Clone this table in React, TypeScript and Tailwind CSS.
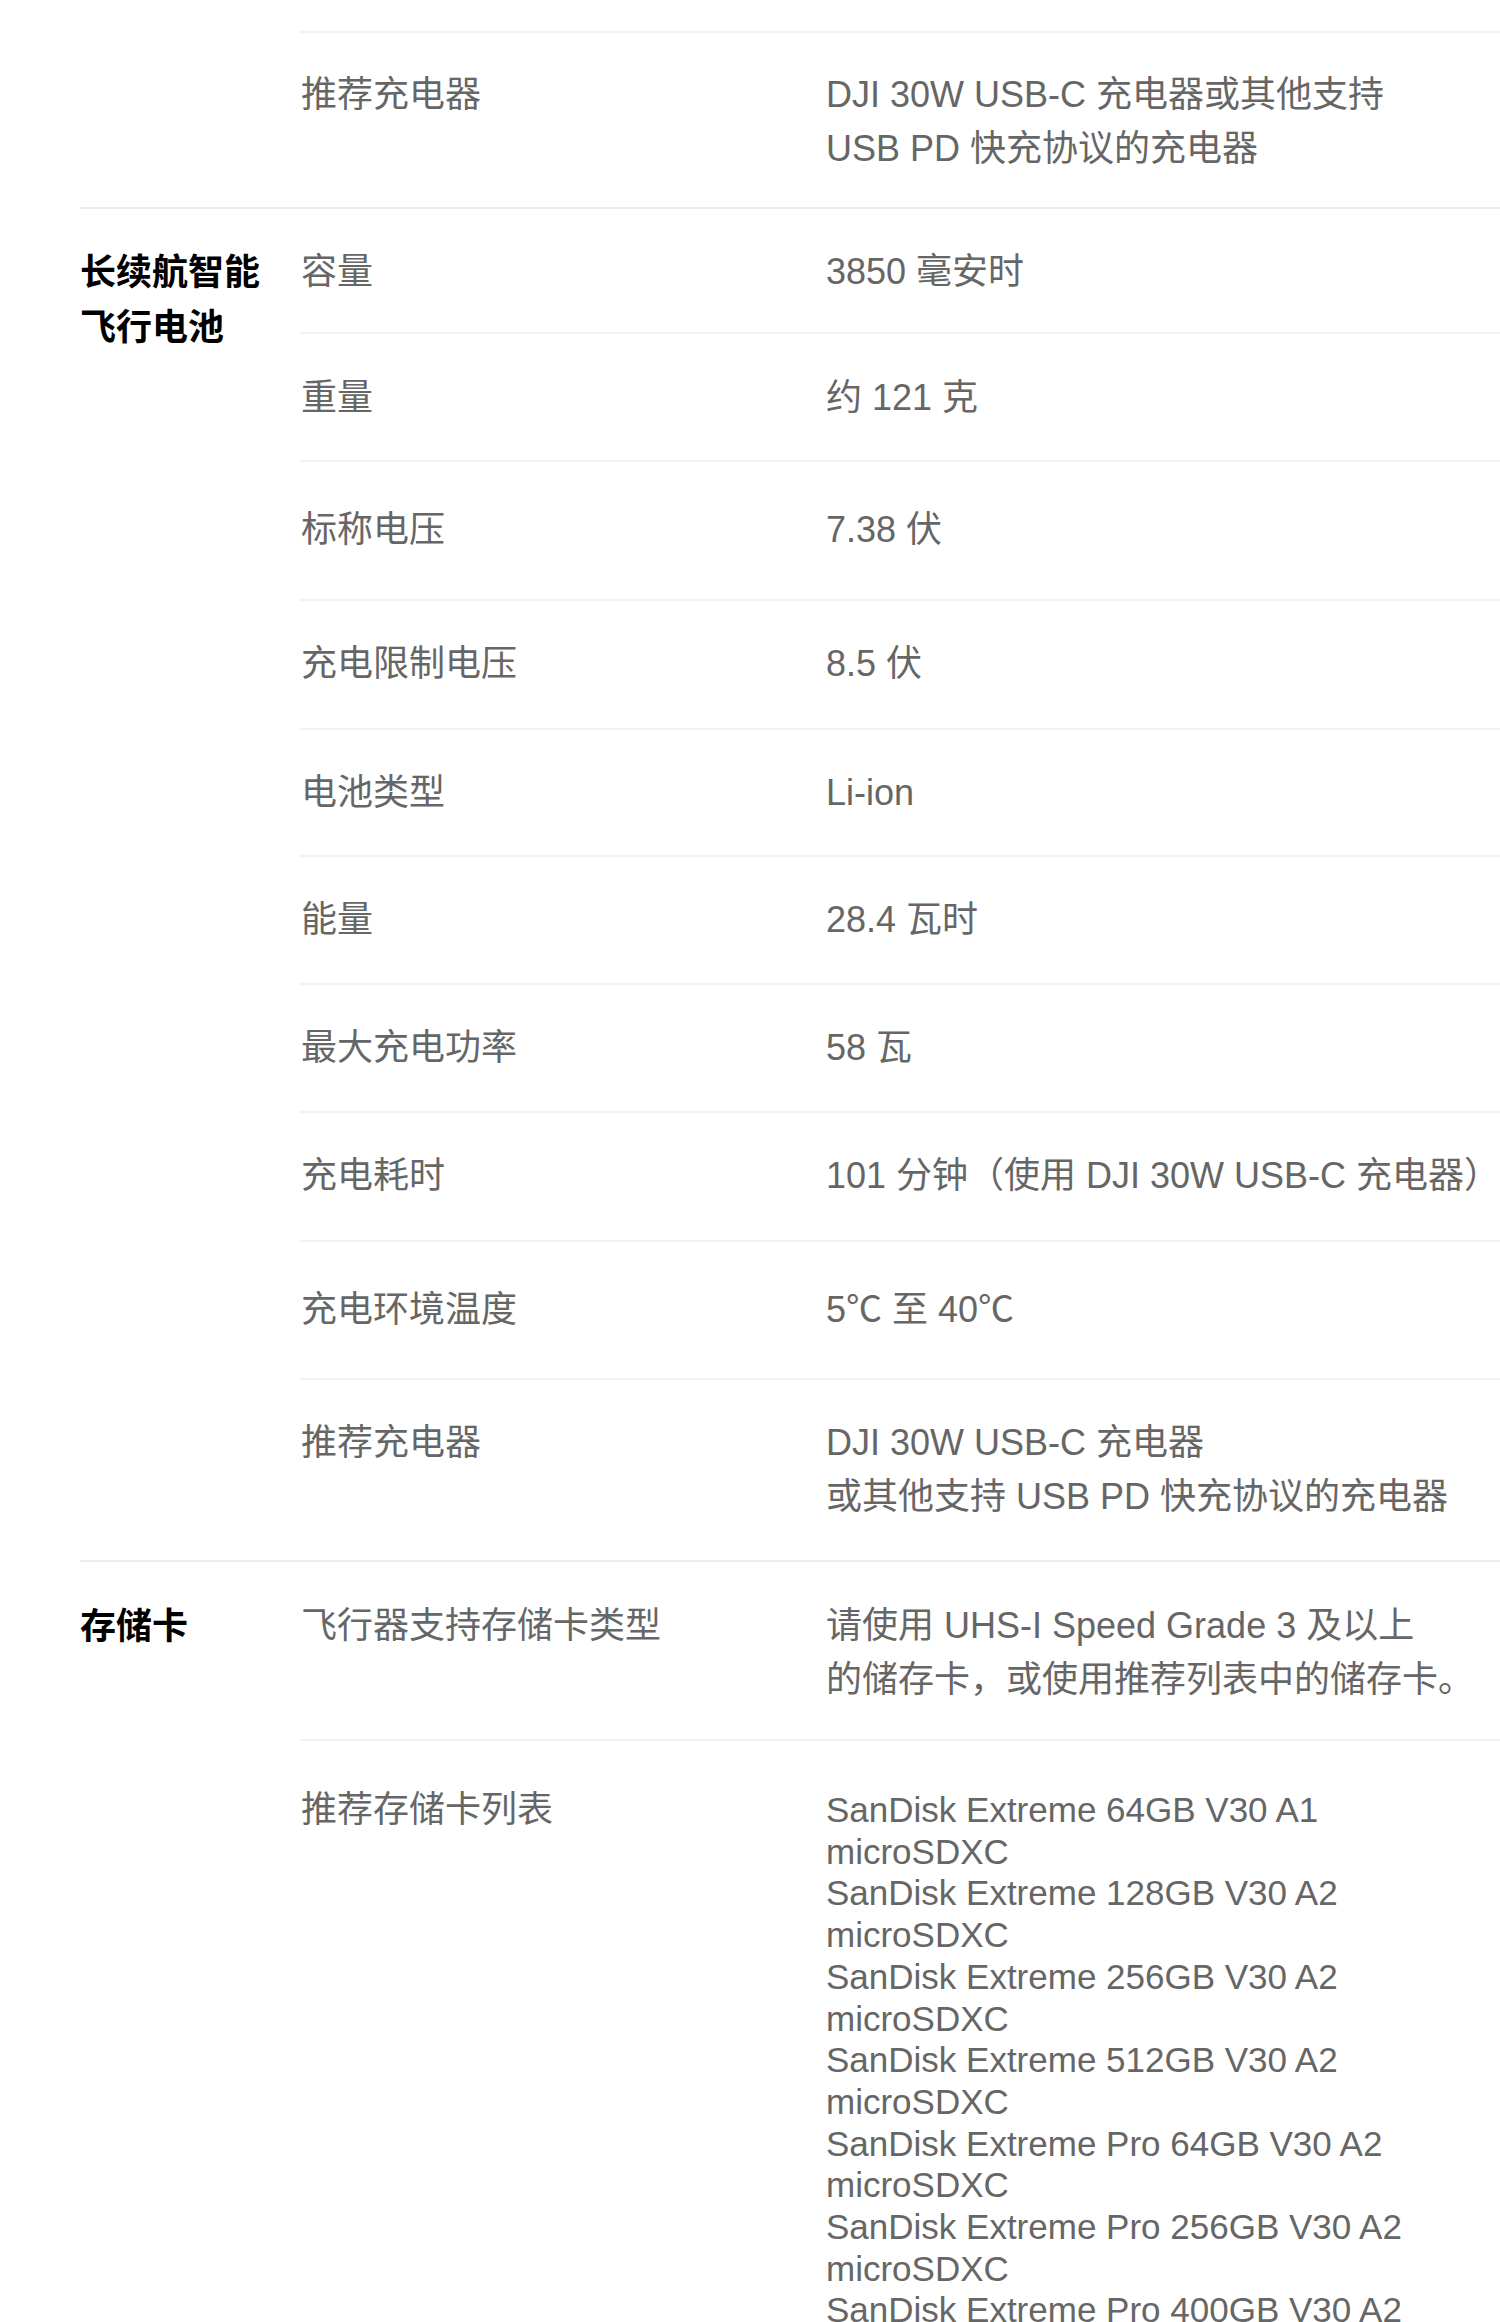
import React from "react";

type Row = {
  label?: string;
  lines: string[];
  pad: string;
  list?: boolean;
};

type Section = {
  group?: string;
  groupPad: string;
  rows: Row[];
};

const cards = [
  "SanDisk Extreme 64GB V30 A1",
  "SanDisk Extreme 128GB V30 A2",
  "SanDisk Extreme 256GB V30 A2",
  "SanDisk Extreme 512GB V30 A2",
  "SanDisk Extreme Pro 64GB V30 A2",
  "SanDisk Extreme Pro 256GB V30 A2",
  "SanDisk Extreme Pro 400GB V30 A2",
  "Kingston Canvas Go! Plus 64GB V30 A2",
  "Kingston Canvas Go! Plus 128GB V30 A2",
];

const sections: Section[] = [
  {
    groupPad: "pt-[0px]",
    rows: [
      { lines: [], pad: "h-[33px]" },
      {
        label: "推荐充电器",
        lines: ["DJI 30W USB-C 充电器或其他支持", "USB PD 快充协议的充电器"],
        pad: "pt-[35px] pb-[31px]",
      },
    ],
  },
  {
    group: "长续航智能飞行电池",
    groupPad: "pt-[36px]",
    rows: [
      { label: "容量", lines: ["3850 毫安时"], pad: "pt-[36px] pb-[33px]" },
      { label: "重量", lines: ["约 121 克"], pad: "pt-[37px] pb-[35px]" },
      { label: "标称电压", lines: ["7.38 伏"], pad: "pt-[41px] pb-[42px]" },
      { label: "充电限制电压", lines: ["8.5 伏"], pad: "pt-[36px] pb-[37px]" },
      { label: "电池类型", lines: ["Li-ion"], pad: "pt-[36px] pb-[35px]" },
      { label: "能量", lines: ["28.4 瓦时"], pad: "pt-[36px] pb-[36px]" },
      { label: "最大充电功率", lines: ["58 瓦"], pad: "pt-[36px] pb-[36px]" },
      {
        label: "充电耗时",
        lines: ["101 分钟（使用 DJI 30W USB-C 充电器）"],
        pad: "pt-[36px] pb-[37px]",
      },
      { label: "充电环境温度", lines: ["5℃ 至 40℃"], pad: "pt-[41px] pb-[41px]" },
      {
        label: "推荐充电器",
        lines: ["DJI 30W USB-C 充电器", "或其他支持 USB PD 快充协议的充电器"],
        pad: "pt-[36px] pb-[36px]",
      },
    ],
  },
  {
    group: "存储卡",
    groupPad: "pt-[37px]",
    rows: [
      {
        label: "飞行器支持存储卡类型",
        lines: ["请使用 UHS-I Speed Grade 3 及以上", "的储存卡，或使用推荐列表中的储存卡。"],
        pad: "pt-[37px] pb-[32px]",
      },
      {
        label: "推荐存储卡列表",
        lines: cards,
        pad: "pt-[42px] pb-[40px]",
        list: true,
      },
    ],
  },
];

function SpecRow({ row, last }: { row: Row; last: boolean }) {
  const border = last ? "" : "border-b-2 border-[#f2f2f2]";
  if (!row.label) {
    return <div className={`${row.pad} ${border}`} />;
  }
  return (
    <div className={`flex ${row.pad} ${border}`}>
      <div className="w-[526px] shrink-0 pl-[1px] text-[36px] leading-[54px] text-[#666666]">
        {row.label}
      </div>
      <div className="flex-1 min-w-0 text-[#666666]">
        {row.list ? (
          <div className="pt-[6px] text-[35px] leading-[41.7px]">
            {row.lines.map((l) => (
              <div key={l}>
                <div className="whitespace-nowrap">{l}</div>
                <div className="whitespace-nowrap">microSDXC</div>
              </div>
            ))}
          </div>
        ) : (
          <div className="text-[36px] leading-[54px]">
            {row.lines.map((l) => (
              <div key={l} className="whitespace-nowrap">
                {l}
              </div>
            ))}
          </div>
        )}
      </div>
    </div>
  );
}

export default function App() {
  return (
    <div className="w-[1500px] bg-white overflow-hidden font-['Liberation_Sans','Noto_Sans_CJK_SC',sans-serif] text-[35px]">
      <div className="pl-[80px]">
        {sections.map((s, i) => (
          <div
            key={i}
            className={`flex ${i < sections.length - 1 ? "border-b-2 border-[#ececec]" : ""}`}
          >
            <div
              className={`w-[220px] shrink-0 pr-[30px] ${s.groupPad} text-[36px] leading-[55px] font-bold text-black`}
            >
              {s.group}
            </div>
            <div className="flex-1 min-w-0">
              {s.rows.map((r, j) => (
                <SpecRow key={j} row={r} last={j === s.rows.length - 1} />
              ))}
            </div>
          </div>
        ))}
      </div>
    </div>
  );
}
